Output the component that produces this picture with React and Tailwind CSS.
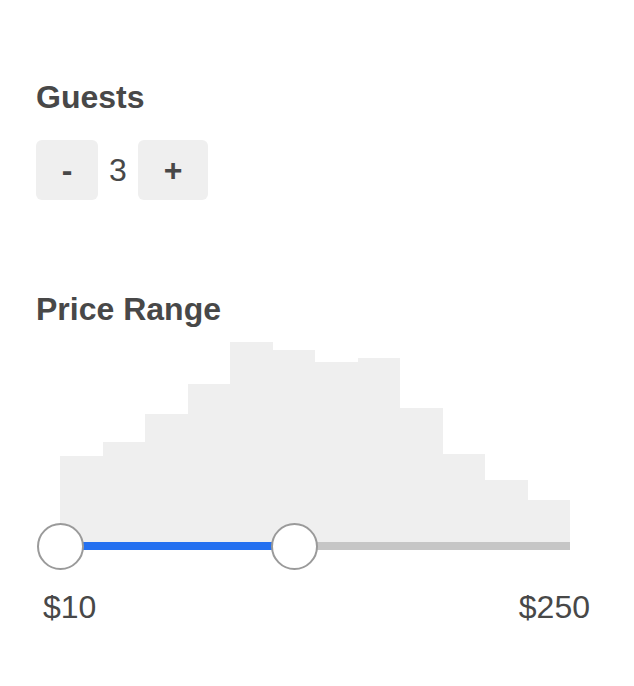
import React, { useState } from 'react';

const bars = [86, 100, 128, 158, 200, 192, 180, 184, 134, 88, 62, 42];

const App = () => {
  const [guests, setGuests] = useState(3);

  return (
    <div
      className="min-h-[686px] w-[634px] bg-white pl-[36px] pt-[77px] text-[#484848]"
      style={{ fontFamily: '"Liberation Sans", Arial, sans-serif' }}
    >
      {/* Guests */}
      <h2 className="text-[32px] font-bold leading-[40px]">Guests</h2>
      <div className="mt-[23px] flex h-[60px] items-center">
        <button
          onClick={() => setGuests(Math.max(1, guests - 1))}
          className="h-[60px] w-[62px] rounded-md bg-[#efefef] text-[32px] font-bold leading-none"
        >
          -
        </button>
        <span className="w-[40px] text-center text-[32px] leading-none">{guests}</span>
        <button
          onClick={() => setGuests(guests + 1)}
          className="h-[60px] w-[70px] rounded-md bg-[#efefef] text-[32px] font-bold leading-none"
        >
          +
        </button>
      </div>

      {/* Price range */}
      <h2 className="mt-[89px] text-[32px] font-bold leading-[40px]">Price Range</h2>
      <div className="mt-[13px] ml-[24px] w-[510px]">
        <div className="flex h-[200px] items-end">
          {bars.map((h, i) => (
            <div key={i} className="flex-1 bg-[#efefef]" style={{ height: h }} />
          ))}
        </div>
        <div className="relative h-[8px] w-full bg-[#c6c6c6]">
          <div className="absolute left-0 top-0 h-[8px] w-[234px] bg-[#2470f0]" />
          <div className="absolute left-[-23px] top-[-19px] h-[47px] w-[47px] rounded-full border-2 border-[#9a9a9a] bg-white" />
          <div className="absolute left-[211px] top-[-19px] h-[47px] w-[47px] rounded-full border-2 border-[#9a9a9a] bg-white" />
        </div>
      </div>
      <div className="mt-[39px] ml-[7px] flex w-[547px] justify-between text-[32px] leading-[36px]">
        <span>$10</span>
        <span>$250</span>
      </div>
    </div>
  );
};

export default App;
